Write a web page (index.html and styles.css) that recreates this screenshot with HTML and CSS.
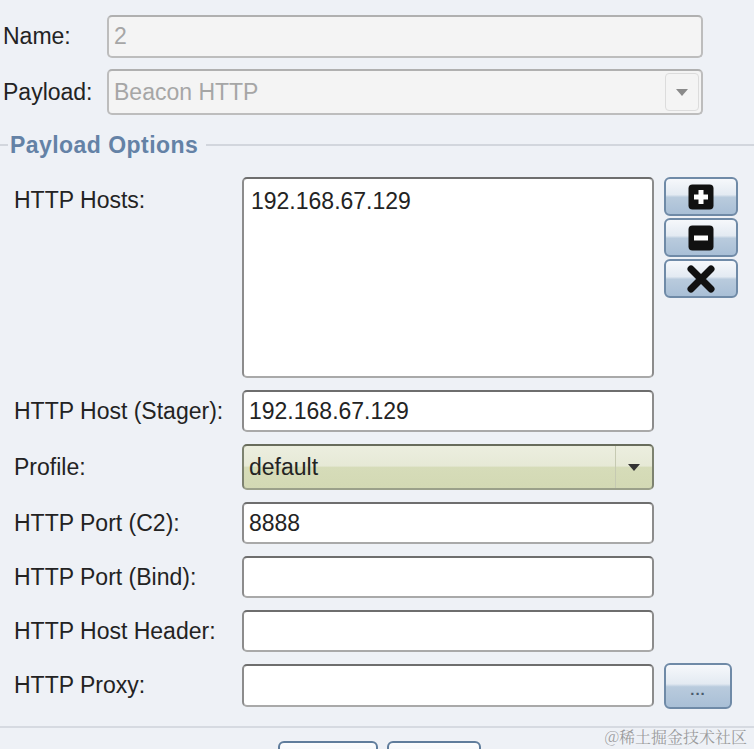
FILE: index.html
```html
<!DOCTYPE html>
<html>
<head>
<meta charset="utf-8">
<link rel="stylesheet" href="styles.css">
</head>
<body>
<div class="dialog">
  <div class="top-form">
    <label class="lbl">Name:</label>
    <div class="field disabled name-field"><span class="val">2</span></div>
    <label class="lbl">Payload:</label>
    <div class="combo disabled payload-combo">
      <span class="val">Beacon HTTP</span>
      <span class="combo-btn"><svg width="12" height="7" viewBox="0 0 12 7"><path d="M0 0h12L6 7z" fill="#8a8a8a"/></svg></span>
    </div>
  </div>

  <div class="section-title">
    <span class="rule short"></span>
    <span class="title-text">Payload Options</span>
    <span class="rule long"></span>
  </div>

  <div class="options">
    <label class="lbl hosts-lbl">HTTP Hosts:</label>
    <div class="textarea"><span class="val">192.168.67.129</span></div>
    <div class="btn-stack">
      <button class="tool-btn" aria-label="add"><svg width="26" height="26" viewBox="0 0 26 26"><rect x="0.5" y="0.5" width="25" height="25" rx="4" fill="#111"/><path d="M13 6v14M6 13h14" stroke="#fff" stroke-width="5"/></svg></button>
      <button class="tool-btn" aria-label="remove"><svg width="26" height="26" viewBox="0 0 26 26"><rect x="0.5" y="0.5" width="25" height="25" rx="4" fill="#111"/><path d="M6 13h14" stroke="#fff" stroke-width="5"/></svg></button>
      <button class="tool-btn" aria-label="clear"><svg width="30" height="28" viewBox="0 0 30 28"><path d="M5 4l20 20M25 4L5 24" stroke="#111" stroke-width="7" stroke-linecap="round"/></svg></button>
    </div>

    <label class="lbl">HTTP Host (Stager):</label>
    <div class="field"><span class="val">192.168.67.129</span></div>
    <div></div>

    <label class="lbl">Profile:</label>
    <div class="combo profile-combo">
      <span class="val">default</span>
      <span class="combo-btn"><svg width="12" height="7" viewBox="0 0 12 7"><path d="M0 0h12L6 7z" fill="#333"/></svg></span>
    </div>
    <div></div>

    <label class="lbl">HTTP Port (C2):</label>
    <div class="field"><span class="val">8888</span></div>
    <div></div>

    <label class="lbl">HTTP Port (Bind):</label>
    <div class="field"></div>
    <div></div>

    <label class="lbl">HTTP Host Header:</label>
    <div class="field"></div>
    <div></div>

    <label class="lbl">HTTP Proxy:</label>
    <div class="field proxy-field"></div>
    <button class="tool-btn dots-btn">...</button>
  </div>

  <div class="separator"></div>

  <div class="bottom-buttons">
    <button class="dlg-btn w1"></button>
    <button class="dlg-btn w2"></button>
  </div>

  <div class="watermark">@稀土掘金技术社区</div>
</div>
</body>
</html>
```

FILE: styles.css
```css
html, body {
  margin: 0;
  padding: 0;
  background: #eef1f6;
  overflow: hidden;
}

.dialog {
  position: relative;
  width: 754px;
  height: 749px;
  overflow: hidden;
  font-family: "Liberation Sans", Arial, sans-serif;
  font-size: 23px;
  color: #232323;
}

.lbl {
  display: flex;
  align-items: center;
  white-space: nowrap;
}

.val {
  white-space: nowrap;
}

/* top */
.top-form {
  display: grid;
  grid-template-columns: 104px 596px;
  row-gap: 11px;
  padding: 15px 0 0 3px;
}

.name-field { height: 43px; }
.payload-combo { height: 46px; }

.field, .combo, .textarea {
  box-sizing: border-box;
  border: 2px solid #8c8c8c;
  border-top-color: #6e6e6e;
  border-bottom-color: #a9a9a9;
  border-radius: 5px;
  background: #fff;
  display: flex;
  align-items: center;
  padding-left: 5px;
}

.field.disabled, .combo.disabled {
  background: #f4f4f4;
  border-color: #bdbdbd;
  border-top-color: #b0b0b0;
  color: #a6a6a6;
}

.combo {
  justify-content: space-between;
  padding-right: 2px;
}

.combo-btn {
  width: 34px;
  align-self: stretch;
  margin: 2px 0;
  box-sizing: border-box;
  border: 1px solid #dcdcdc;
  border-radius: 4px;
  display: flex;
  align-items: center;
  justify-content: center;
}

/* section title */
.section-title {
  display: flex;
  align-items: center;
  margin-top: 18px;
  height: 24px;
}

.rule {
  height: 2px;
  background: #d2d6dd;
}
.rule.short { width: 8px; }
.rule.long { flex: 1; margin-left: 8px; }

.title-text {
  font-weight: bold;
  color: #6482a6;
  margin-left: 2px;
  letter-spacing: 0.45px;
}

/* options */
.options {
  display: grid;
  grid-template-columns: 228px 412px 84px;
  grid-template-rows: 201px 42px 46px 42px 42px 42px 43px;
  row-gap: 12px;
  padding-left: 14px;
  margin-top: 20px;
}

.options > .field { height: 42px; }
.options > .profile-combo { height: 46px; }
.options > .proxy-field { height: 43px; }

.options .hosts-lbl {
  align-items: flex-start;
  padding-top: 10px;
}

.textarea {
  align-items: flex-start;
  padding-top: 9px;
  padding-left: 7px;
}

.profile-combo {
  background: linear-gradient(#eceedf 0%, #e6e9d6 48%, #d6dcb9 50%, #d3d9b4 100%);
  border-color: #7d8270;
  border-top-color: #686c5c;
  border-bottom-color: #9ba08a;
  padding-right: 0;
}
.profile-combo .combo-btn {
  border: none;
  border-left: 1px solid #c6cab2;
  margin: 0;
  width: 37px;
  border-radius: 0;
}

.btn-stack {
  display: flex;
  flex-direction: column;
  gap: 2px;
  padding-left: 10px;
}

.tool-btn {
  box-sizing: border-box;
  width: 74px;
  height: 39px;
  padding: 0;
  border: 2px solid #6f8aa7;
  border-radius: 6px;
  background: linear-gradient(#f6f8fb 0%, #e3eaf2 45%, #b9cbdd 52%, #a9bfd6 100%);
  display: flex;
  align-items: center;
  justify-content: center;
}

.dots-btn {
  width: 68px;
  height: 46px;
  margin-left: 10px;
  align-self: center;
  font-family: "Liberation Sans", Arial, sans-serif;
  font-size: 15px;
  font-weight: bold;
  color: #4a5a6c;
  padding-top: 8px;
  letter-spacing: 1px;
}

.separator {
  margin-top: 19px;
  height: 2px;
  background: #d6dae1;
}

.bottom-buttons {
  display: flex;
  justify-content: center;
  gap: 9px;
  margin-top: 13px;
  padding-left: 4px;
}

.dlg-btn {
  height: 40px;
  border: 2px solid #607d9c;
  border-radius: 6px;
  background: linear-gradient(#fbfcfd, #e6ecf3);
}
.dlg-btn.w1 { width: 100px; }
.dlg-btn.w2 { width: 94px; }

.watermark {
  position: absolute;
  right: 7px;
  top: 725px;
  font-family: "Noto Serif CJK SC", "Noto Sans CJK SC", serif;
  font-size: 16px;
  color: rgba(140, 140, 140, 0.85);
}
```
